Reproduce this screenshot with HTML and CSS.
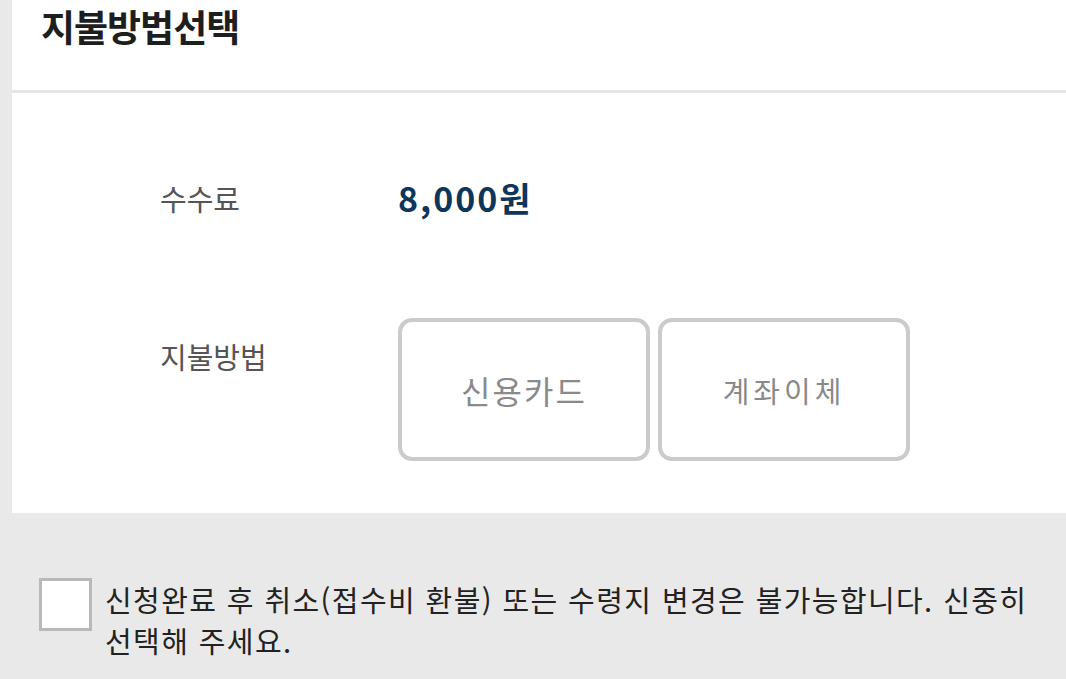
FILE: index.html
```html
<!DOCTYPE html>
<html lang="ko">
<head>
    <meta charset="UTF-8">
    <meta name="viewport" content="width=device-width, initial-scale=1.0">
    <title>지불방법선택</title>
    <link rel="stylesheet" href="styles.css">
</head>
<body>
    <div class="panel">
        <div class="panel-head">
            <h1>지불방법선택</h1>
        </div>
        <div class="panel-body">
            <!-- 수수료 -->
            <div class="row">
                <div class="label">수수료</div>
                <div class="fee">8,000원</div>
            </div>
            <!-- 지불방법 -->
            <div class="row row-pay">
                <div class="label label-pay">지불방법</div>
                <div class="pay-buttons">
                    <button class="pay-btn">신용카드</button>
                    <button class="pay-btn pay-btn-small">계좌이체</button>
                </div>
            </div>
        </div>
    </div>

    <label class="agree">
        <span class="check-box"></span>
        <span class="agree-text">신청완료 후 취소(접수비 환불) 또는 수령지 변경은 불가능합니다. 신중히 선택해 주세요.</span>
    </label>
</body>
</html>
```

FILE: styles.css
```css
/* 기본 */
body {
    margin: 0;
    padding: 0;
    background-color: #e9e9e9;
    font-family: "Noto Sans CJK KR", "Noto Sans", sans-serif;
    color: #222;
}

.panel {
    margin-left: 12px;
    background-color: #fff;
}

.panel-head {
    height: 90px;
    border-bottom: 3px solid #e4e4e4;
}

h1 {
    margin: 0;
    padding-left: 29px;
    font-size: 37px;
    line-height: 52px;
    font-weight: 700;
    color: #1e1e1e;
    letter-spacing: -1px;
}

.panel-body {
    height: 335px;
    padding: 85px 0 0 148px;
}

.row {
    display: flex;
    align-items: flex-start;
}

.row-pay {
    margin-top: 100px;
}

.label {
    width: 238px;
    font-size: 29px;
    line-height: 40px;
    color: #555;
}

.label-pay {
    margin-top: 18px;
}

.fee {
    font-size: 34px;
    line-height: 40px;
    font-weight: 700;
    letter-spacing: 2px;
    color: #0d365a;
}

.pay-buttons {
    display: flex;
    gap: 8px;
}

.pay-btn {
    width: 252px;
    height: 143px;
    padding: 0;
    background-color: #fff;
    border: 4px solid #cbcbcb;
    border-radius: 14px;
    font-family: inherit;
    font-size: 32px;
    letter-spacing: 2px;
    color: #8a8a8a;
    cursor: pointer;
}

.pay-btn-small {
    font-size: 29px;
    letter-spacing: 4px;
}

/* 동의 체크 */
.agree {
    display: flex;
    align-items: flex-start;
    gap: 13px;
    padding: 65px 30px 0 39px;
}

.check-box {
    flex: none;
    width: 47px;
    height: 47px;
    border: 3px solid #b9b9b9;
    background-color: #fff;
}

.agree-text {
    font-size: 29px;
    line-height: 41px;
    letter-spacing: 1.4px;
    color: #222;
    margin-top: 1px;
    word-break: keep-all;
}
```
